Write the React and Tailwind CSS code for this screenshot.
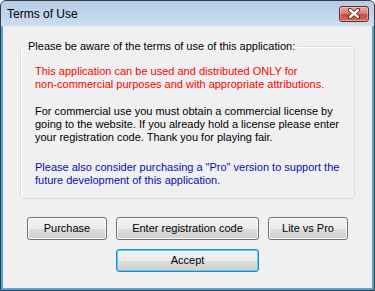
import React from "react";

const btn =
  "h-[23px] rounded-[3px] border border-[#707070] bg-[linear-gradient(to_bottom,#f2f2f2_0%,#ebebeb_50%,#dddddd_50%,#cfcfcf_100%)] shadow-[inset_0_0_0_1px_#fcfcfc] text-[11px] text-black flex items-center justify-center";

function CloseButton() {
  return (
    <div className="w-[30px] h-[16px] rounded-[3px] border border-[#6e2a22] bg-[linear-gradient(to_bottom,#e8a89f_0%,#d98175_45%,#c84a3a_55%,#d3705f_100%)] shadow-[inset_0_0_0_1px_rgba(255,255,255,0.35)] flex items-center justify-center">
      <svg width="14" height="11" viewBox="0 0 14 11">
        <path d="M3 2 L11 9 M11 2 L3 9" stroke="#5a1e18" strokeWidth="4.2" strokeLinecap="round" fill="none" />
        <path d="M3 2 L11 9 M11 2 L3 9" stroke="#ffffff" strokeWidth="2.4" strokeLinecap="round" fill="none" />
      </svg>
    </div>
  );
}

export default function App() {
  return (
    <div className="w-[375px] h-[291px] bg-[#4ba6dd] border border-[#3c3c3c] rounded-t-[6px] flex flex-col overflow-hidden font-['Liberation_Sans',Arial,sans-serif]">
      {/* title bar */}
      <div className="h-[25px] shrink-0 flex items-center justify-between pl-[6px] pr-[5px] bg-[linear-gradient(to_bottom,#b4cbe7_0%,#c2d6ed_60%,#cbddf1_100%)]">
        <span className="text-[12px] text-black">Terms of Use</span>
        <CloseButton />
      </div>

      {/* client area */}
      <div className="flex-1 mx-[2px] mb-[2px] bg-[#f0f0f0] flex flex-col">
        <fieldset className="mx-[17px] mt-[14px] border border-[#d8dde2] rounded-[3px] shadow-[inset_1px_1px_0_#ffffff] p-0">
          <legend className="ml-[5px] px-[2px] text-[11px] leading-[13px] text-black">
            Please be aware of the terms of use of this application:
          </legend>
          <div className="px-[14px] pb-[11px] text-[11px] leading-[13px]">
            <p className="mt-[12px] text-[#ff0000]">
              This application can be used and distributed ONLY for
              <br />
              non-commercial purposes and with appropriate attributions.
            </p>
            <p className="mt-[14px] text-black">
              For commercial use you must obtain a commercial license by
              <br />
              going to the website. If you already hold a license please enter
              <br />
              your registration code. Thank you for playing fair.
            </p>
            <p className="mt-[17px] text-[#0c0cb0]">
              Please also consider purchasing a "Pro" version to support the
              <br />
              future development of this application.
            </p>
          </div>
        </fieldset>

        <div className="mt-[18px] flex justify-center gap-[9px]">
          <button className={`${btn} w-[80px]`}>Purchase</button>
          <button className={`${btn} w-[143px]`}>Enter registration code</button>
          <button className={`${btn} w-[80px]`}>Lite vs Pro</button>
        </div>
        <div className="mt-[9px] flex justify-center">
          <button className="w-[143px] h-[23px] rounded-[3px] border border-[#3c7fb1] bg-[linear-gradient(to_bottom,#f2f2f2_0%,#ebebeb_50%,#dddddd_50%,#cfcfcf_100%)] shadow-[inset_0_0_0_1px_#48d4fd] text-[11px] text-black flex items-center justify-center">
            Accept
          </button>
        </div>
      </div>
    </div>
  );
}
